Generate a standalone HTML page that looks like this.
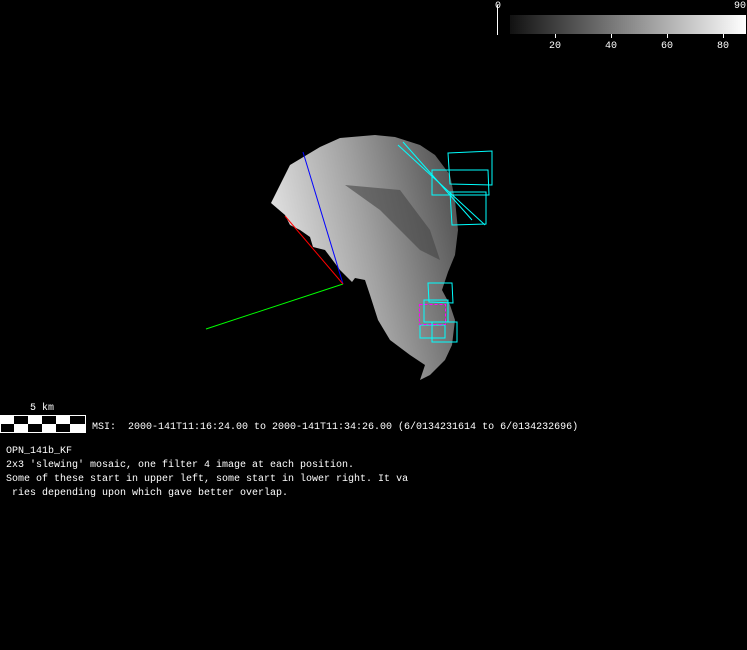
<!DOCTYPE html><html><head><style>
body{margin:0;width:747px;height:650px;background:#000;overflow:hidden;position:relative;font-family:"Liberation Mono",monospace;color:#fff}
.t{position:absolute;font-size:10px;line-height:14px;white-space:pre}
</style></head><body>
<svg width="747" height="650" style="position:absolute;left:0;top:0">
<defs><linearGradient id="g" x1="0" y1="0.5" x2="1" y2="0.2"><stop offset="0" stop-color="#e8e8e8"/><stop offset="0.5" stop-color="#a0a0a0"/><stop offset="1" stop-color="#505050"/></linearGradient>
<linearGradient id="cb" x1="0" x2="1"><stop offset="0" stop-color="#111"/><stop offset="1" stop-color="#fff"/></linearGradient></defs>
<rect x="510" y="15" width="236" height="19" fill="url(#cb)"/>
<line x1="497.5" y1="5" x2="497.5" y2="35" stroke="#fff"/>
<g stroke="#fff"><line x1="555.5" y1="34" x2="555.5" y2="38"/><line x1="611.5" y1="34" x2="611.5" y2="38"/><line x1="667.5" y1="34" x2="667.5" y2="38"/><line x1="723.5" y1="34" x2="723.5" y2="38"/></g>
<polygon fill="url(#g)" points="271,203 290,165 320,147 340,138 375,135 395,137 420,145 435,155 450,175 455,200 458,230 455,255 448,272 442,290 450,305 455,320 452,345 445,360 430,375 420,380 425,365 410,355 390,340 378,320 370,295 365,280 355,278 352,282 340,270 325,250 313,247 310,237 300,230 290,225 285,215"/>
<polygon fill="#444" opacity="0.6" points="345,185 400,190 430,230 440,260 420,250 380,210"/>
<line x1="206" y1="329" x2="343" y2="284" stroke="#0f0"/>
<line x1="303" y1="152" x2="343" y2="284" stroke="#00f"/>
<line x1="285" y1="216" x2="343" y2="284" stroke="#f00"/>
<g fill="none" stroke="#0ff">
<polygon points="448,153 492,151 492,185 450,184"/><polygon points="432,170 488,170 489,195 432,195"/><polygon points="450,192 486,192 486,224 452,225"/><line x1="398" y1="145" x2="485" y2="225"/><line x1="403" y1="142" x2="472" y2="220"/>
<polygon points="428,283 452,283 453,303 429,302"/><polygon points="424,300 448,300 448,322 424,322"/><polygon points="432,322 457,322 457,342 432,342"/><polygon points="420,325 445,325 445,338 420,338"/></g>
<rect x="419.5" y="304.5" width="26" height="20" fill="none" stroke="#f0f" stroke-dasharray="3,2"/>
<rect x="0.5" y="415.5" width="85" height="17" fill="#000" stroke="#fff"/>
<g fill="#fff"><rect x="0" y="416" width="14" height="8"/><rect x="28" y="416" width="14" height="8"/><rect x="56" y="416" width="14" height="8"/><rect x="14" y="424" width="14" height="8"/><rect x="42" y="424" width="14" height="8"/><rect x="70" y="424" width="15" height="8"/></g>
</svg>
<div class="t" style="left:495px;top:0">0</div>
<div class="t" style="left:734px;top:0">90</div>
<div class="t" style="left:549px;top:40px">20</div>
<div class="t" style="left:605px;top:40px">40</div>
<div class="t" style="left:661px;top:40px">60</div>
<div class="t" style="left:717px;top:40px">80</div>
<div class="t" style="left:30px;top:402px">5 km</div>
<div class="t" style="left:92px;top:421px">MSI:  2000-141T11:16:24.00 to 2000-141T11:34:26.00 (6/0134231614 to 6/0134232696)</div>
<div class="t" style="left:6px;top:445px">OPN_141b_KF
2x3 'slewing' mosaic, one filter 4 image at each position.
Some of these start in upper left, some start in lower right. It va
 ries depending upon which gave better overlap.</div>
</body></html>
